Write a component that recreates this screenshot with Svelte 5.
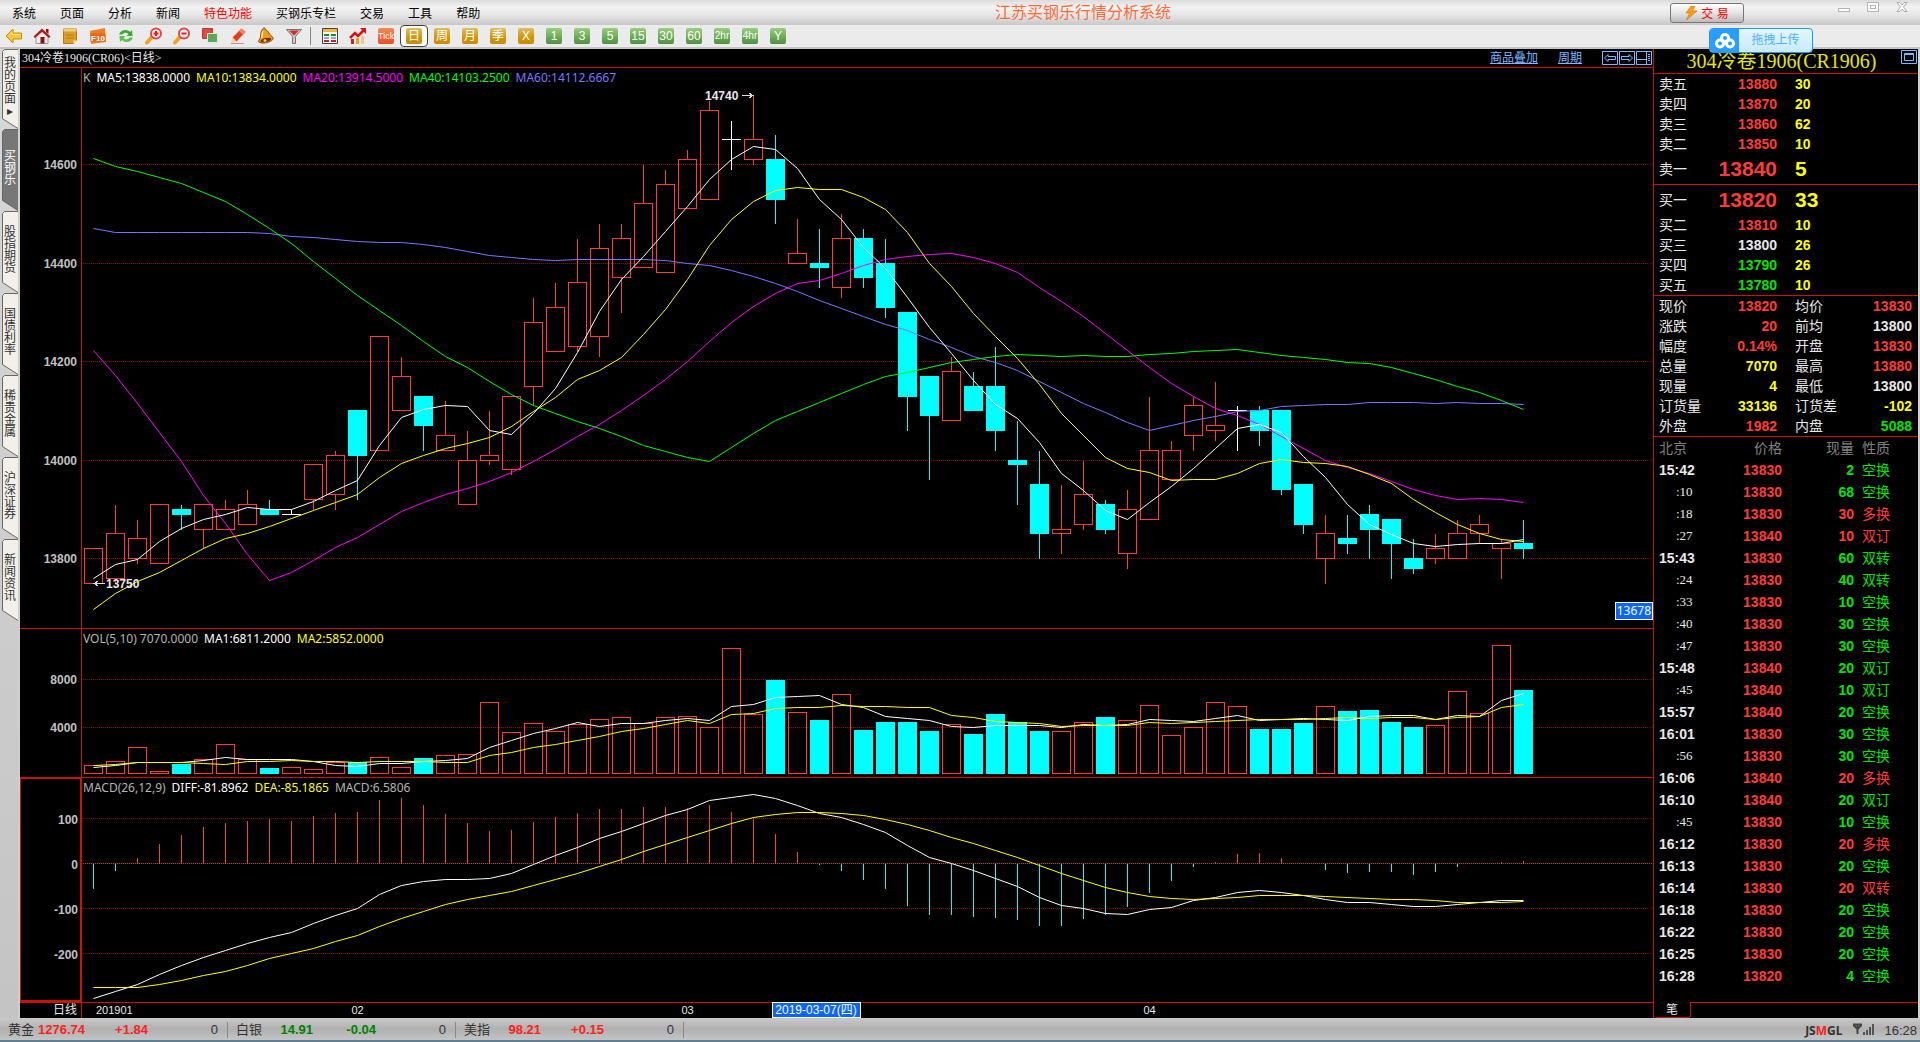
<script>
  const menus = ['系统', '页面', '分析', '新闻', '特色功能', '买钢乐专栏', '交易', '工具', '帮助']
  const sideTabs = ['我的页面', '买钢乐', '股指期货', '国债利率', '稀贵金属', '沪深证券', '新闻资讯']
  const tools = ['back', 'home', 'note', 'f10', 'refresh', 'zoomin', 'zoomout', 'layers', 'pencil', 'bell', 'filter']
  const goldPeriods = ['日', '周', '月', '季', 'X']
  const greenPeriods = ['1', '3', '5', '15', '30', '60', '2hr', '4hr', 'Y']

  // [kind, body top, body bottom, high, low]  r = up, c = down, w = flat
  const candles = [
    ['r', 13820, 13750, 13820, 13750], ['r', 13850, 13760, 13910, 13750], ['r', 13840, 13800, 13880, 13790],
    ['r', 13910, 13790, 13910, 13790], ['c', 13900, 13890, 13910, 13860], ['r', 13910, 13860, 13910, 13820],
    ['r', 13900, 13860, 13920, 13860], ['r', 13910, 13870, 13940, 13870], ['c', 13900, 13890, 13920, 13890],
    ['w', 13890, 13890, 13900, 13890], ['r', 13990, 13920, 13990, 13900], ['r', 14010, 13930, 14020, 13900],
    ['c', 14100, 14010, 14100, 13920], ['r', 14250, 14020, 14250, 14020], ['r', 14170, 14100, 14210, 14100],
    ['c', 14130, 14070, 14130, 14020], ['r', 14050, 14020, 14120, 14020], ['r', 14000, 13910, 14060, 13910],
    ['r', 14010, 14000, 14100, 13990], ['r', 14130, 13980, 14130, 13970], ['r', 14280, 14150, 14330, 14110],
    ['r', 14310, 14220, 14360, 14220], ['r', 14360, 14230, 14450, 14220], ['r', 14430, 14250, 14480, 14210],
    ['r', 14450, 14370, 14480, 14300], ['r', 14520, 14390, 14600, 14390], ['r', 14560, 14380, 14590, 14380],
    ['r', 14610, 14510, 14630, 14510], ['r', 14710, 14530, 14730, 14530], ['w', 14650, 14650, 14690, 14590],
    ['r', 14650, 14610, 14740, 14600], ['c', 14610, 14530, 14660, 14480], ['r', 14420, 14400, 14490, 14400],
    ['c', 14400, 14390, 14470, 14350], ['r', 14450, 14350, 14500, 14330], ['c', 14450, 14370, 14470, 14350],
    ['c', 14400, 14310, 14450, 14290], ['c', 14300, 14130, 14300, 14060], ['c', 14170, 14090, 14170, 13960],
    ['r', 14180, 14080, 14210, 14080], ['c', 14150, 14100, 14180, 14100], ['c', 14150, 14060, 14230, 14020],
    ['c', 14000, 13990, 14080, 13910], ['c', 13950, 13850, 14020, 13800], ['r', 13860, 13850, 13950, 13810],
    ['r', 13930, 13870, 14000, 13860], ['c', 13910, 13860, 13920, 13850], ['r', 13900, 13810, 13940, 13780],
    ['r', 14020, 13880, 14130, 13880], ['r', 14020, 13960, 14040, 13960], ['r', 14110, 14050, 14130, 14020],
    ['r', 14070, 14060, 14160, 14040], ['w', 14100, 14100, 14110, 14020], ['c', 14100, 14060, 14110, 14030],
    ['c', 14100, 13940, 14100, 13930], ['c', 13950, 13870, 13950, 13850], ['r', 13850, 13800, 13890, 13750],
    ['c', 13840, 13830, 13890, 13810], ['c', 13890, 13860, 13910, 13800], ['c', 13880, 13830, 13880, 13760],
    ['c', 13800, 13780, 13840, 13770], ['r', 13820, 13800, 13850, 13790], ['r', 13850, 13800, 13880, 13800],
    ['r', 13870, 13850, 13890, 13830], ['r', 13830, 13820, 13840, 13760], ['c', 13830, 13820, 13880, 13800]
  ]
  const volumes = [
    775, 1165, 2330, 330, 940, 1330, 2580, 1275, 530, 665, 500, 1080, 1080, 1500, 665, 1440, 1665, 1750, 6085, 3580,
    4330, 3665, 4250, 4665, 4830, 4330, 4830, 4915, 4000, 10580, 5080, 7940, 5250, 4530, 6750, 3695, 4360, 4360, 3610,
    4250, 3360, 5030, 4440, 3610, 3665, 4415, 4780, 4580, 5830, 3330, 4000, 6080, 5750, 3780, 3780, 4280, 5750, 5280,
    5440, 4360, 3945, 4165, 7000, 5165, 10835, 7070
  ]
  const macd = [
    -57, -15, 12, 45, 65, 81, 90, 96, 99, 96, 107, 114, 116, 143, 147, 130, 112, 90, 74, 76, 94, 105, 114, 123, 123, 127,
    127, 124, 130, 116, 103, 67, 27, -3, -17, -37, -57, -93, -115, -115, -119, -121, -126, -139, -139, -124, -115, -97,
    -64, -39, -8, 5, 21, 25, 12, -1, -13, -21, -19, -19, -24, -19, -8, -1, 3, 6
  ]
  const diff = [
    -302, -285, -270, -247, -227, -210, -194, -179, -165, -154, -134, -116, -101, -69, -49, -40, -36, -36, -33, -22, -3,
    17, 36, 56, 71, 89, 107, 120, 140, 147, 153, 144, 128, 111, 102, 87, 69, 39, 13, 0, -16, -33, -51, -76, -93, -100,
    -111, -113, -104, -98, -84, -76, -64, -60, -64, -71, -80, -87, -87, -91, -96, -96, -91, -87, -84, -82
  ]
  const dea = [
    -276, -276, -276, -269, -260, -251, -241, -227, -213, -202, -189, -174, -160, -140, -122, -107, -91, -80, -71, -62,
    -49, -36, -22, -7, 9, 27, 42, 58, 73, 89, 102, 109, 113, 113, 111, 107, 98, 87, 73, 58, 44, 29, 13, -4, -22, -38,
    -53, -64, -73, -78, -80, -78, -76, -71, -71, -71, -73, -76, -78, -80, -81, -84, -87, -87, -87, -85
  ]

  const closes = candles.map(c => (c[0] === 'c' ? c[2] : c[1]))

  // head holds the averages of the days that need closes from before the first bar
  function average(values, n, head) {
    return values.map((v, i) => {
      if (i < head.length) return head[i]
      return values.slice(i - n + 1, i + 1).reduce((a, b) => a + b, 0) / n
    })
  }

  const priceLines = [
    { cls: 'blue', values: average(closes, 60, [
      14470, 14461, 14461, 14461, 14461, 14461, 14463, 14463, 14459, 14453, 14451, 14448, 14443, 14441, 14441, 14437,
      14431, 14423, 14415, 14411, 14407, 14405, 14407, 14407, 14407, 14407, 14405, 14399, 14395, 14384, 14372, 14358,
      14342, 14323, 14307, 14291, 14275, 14263, 14244, 14228, 14210, 14198, 14181, 14160, 14138, 14115, 14096, 14076,
      14060, 14070, 14080, 14088, 14098, 14101, 14109, 14111, 14113, 14113, 14117]) },
    { cls: 'green', values: average(closes, 40, [
      14612, 14597, 14585, 14573, 14561, 14544, 14524, 14498, 14471, 14439, 14403, 14369, 14335, 14303, 14273, 14241,
      14210, 14187, 14159, 14133, 14110, 14095, 14079, 14064, 14047, 14029, 14017, 14005, 13997, 14026, 14054, 14080,
      14099, 14117, 14136, 14153, 14169, 14177, 14187]) },
    { cls: 'magenta', values: average(closes, 20, [
      14222, 14171, 14114, 14055, 13997, 13929, 13871, 13808, 13755, 13772, 13797, 13822, 13843, 13869, 13895, 13914,
      13931, 13942, 13956]) },
    { cls: 'yellow', values: average(closes, 10, [13696, 13729, 13753, 13772, 13797, 13820, 13841, 13850, 13866]) },
    { cls: 'white', values: average(closes, 5, [13759, 13788, 13798, 13834]) }
  ]
  const volumeLines = [
    { cls: 'white', values: average(volumes, 5, [665, 800, 1050, 1050]) },
    { cls: 'yellow', values: average(volumes, 10, [830, 915, 1050, 1050, 1050, 1000, 915, 1165, 1165]) }
  ]

  // panel heights follow the window
  let priceH = $state(560)
  let volH = $state(148)
  let macdH = $state(224)

  const scale = (v, h, max, min) => ((max - v) / (max - min)) * h
  const py = v => Math.floor(scale(v, priceH, 14796, 13659)) + 0.5
  const vy = v => Math.floor(scale(v, volH, 12192, -142)) + 0.5
  const my = v => Math.floor(scale(v, macdH, 190, -309)) + 0.5
  const x = i => 11.5 + i * 22
  const points = (values, y) => values.map((v, i) => `${x(i)},${y(v)}`).join(' ')

  const asks = [
    ['卖五', 13880, 30, 'up'], ['卖四', 13870, 20, 'up'], ['卖三', 13860, 62, 'up'], ['卖二', 13850, 10, 'up'], ['卖一', 13840, 5, 'up']
  ]
  const bids = [
    ['买一', 13820, 33, 'up'], ['买二', 13810, 10, 'up'], ['买三', 13800, 26, 'flat'], ['买四', 13790, 26, 'down'], ['买五', 13780, 10, 'down']
  ]
  const stats = [
    ['现价', '13820', 'up', '均价', '13830', 'up'],
    ['涨跌', '20', 'up', '前均', '13800', 'flat'],
    ['幅度', '0.14%', 'up', '开盘', '13830', 'up'],
    ['总量', '7070', 'qty', '最高', '13880', 'up'],
    ['现量', '4', 'qty', '最低', '13800', 'flat'],
    ['订货量', '33136', 'qty', '订货差', '-102', 'qty'],
    ['外盘', '1982', 'up', '内盘', '5088', 'down']
  ]
  const ticks = [
    ['15:42', 13830, 2, '空换'], [':10', 13830, 68, '空换'], [':18', 13830, 30, '多换', 1], [':27', 13840, 10, '双订', 1],
    ['15:43', 13830, 60, '双转'], [':24', 13830, 40, '双转'], [':33', 13830, 10, '空换'], [':40', 13830, 30, '空换'],
    [':47', 13830, 30, '空换'], ['15:48', 13840, 20, '双订'], [':45', 13840, 10, '双订'], ['15:57', 13840, 20, '空换'],
    ['16:01', 13830, 30, '空换'], [':56', 13830, 30, '空换'], ['16:06', 13840, 20, '多换', 1], ['16:10', 13840, 20, '双订'],
    [':45', 13830, 10, '空换'], ['16:12', 13830, 20, '多换', 1], ['16:13', 13830, 20, '空换'], ['16:14', 13830, 20, '双转', 1],
    ['16:18', 13830, 20, '空换'], ['16:22', 13830, 20, '空换'], ['16:25', 13830, 20, '空换'], ['16:28', 13820, 4, '空换']
  ]
  const quotes = [
    ['黄金', '1276.74', '+1.84', 'rise'], ['白银', '14.91', '-0.04', 'fall'], ['美指', '98.21', '+0.15', 'rise']
  ]
</script>

{#snippet bookRows(rows)}
  {#each rows as [name, price, qty, tone]}
    <tr class:best={name.endsWith('一')}>
      <th scope="row">{name}</th>
      <td class="num {tone}">{price}</td>
      <td class="lots">{qty}</td>
    </tr>
  {/each}
{/snippet}

{#snippet toolIcon(name)}
  <svg width="18" height="18" viewBox="0 0 18 18" aria-hidden="true">
    {#if name === 'back'}
      <path d="M1 9l7-7v4h8.500v6H8v4z" fill="#fbc62c" stroke="#c98a12" />
      <path d="M4 8.500l3-3v2h8" stroke="#ffeb96" fill="none" />
    {:else if name === 'home'}
      <path d="M3 9v7.500h12V9L9 4z" fill="#eee" stroke="#999" />
      <path d="M0.500 9.500L9 1.500l8.500 8-1.500 1.500L9 5l-7 6z" fill="#b01c1c" />
      <path d="M13 2h2.500v5L13 5zM7.500 10h4v6.500h-4z" fill="#8e1212" />
    {:else if name === 'note'}
      <path d="M2.500 2h13v11l-3 3.500h-10z" fill="#dc9f2c" stroke="#b57b13" />
      <path d="M2.500 2h13v2.500h-13z" fill="#f6cd70" />
      <path d="M5 8h8M5 11h8" stroke="#b57b13" />
      <path d="M12.500 16.500v-3h3z" fill="#fff0c0" />
    {:else if name === 'f10'}
      <path d="M1 4l5-1 10-2 1 14-15 2z" fill="#ef7d21" />
      <path d="M1.500 6.500h15v8h-15z" fill="#e2691a" />
      <text x="9" y="14" text-anchor="middle" fill="#fff" font-size="8" font-weight="700">F10</text>
    {:else if name === 'refresh'}
      <path d="M2 7.500C4 2 11 2 13 5l2-2 .5 6H9.500l2-2C9.500 5 6.500 5.500 5.500 7.500z" fill="#3fa63a" />
      <path d="M16 10.500c-2 5.500-9 5.500-11 2.500l-2 2L2.500 9h6l-2 2c2 2 5 1.500 6-.5z" fill="#5fbe50" />
    {:else if name === 'zoomin' || name === 'zoomout'}
      <path d="M6.500 10.500L2 15.500" stroke="#f5a21c" stroke-width="4" stroke-linecap="round" />
      <circle cx="11" cy="6.500" r="5" fill="#fff1f1" stroke="#e04848" stroke-width="2" />
      <path d={name === 'zoomin' ? 'M8.500 6.500h5M11 4v5' : 'M8.500 6.500h5'} stroke="#e21b1b" stroke-width="2" />
    {:else if name === 'layers'}
      <path d="M1.500 1.500h10v10h-10z" fill="#e0493f" stroke="#b8382f" />
      <path d="M6.500 6.500h10v9h-10z" fill="#58a95a" stroke="#d9ecd9" />
    {:else if name === 'pencil'}
      <path d="M3.500 10.500L12.500 1.500l4 3.500-9 9.500z" fill="#e23c26" />
      <path d="M10 4l4 3.500 2.500-2.500-4-3.500z" fill="#f58a74" />
      <path d="M3.500 10.500l4 4-5.500 1.500z" fill="#f4d3a0" />
      <path d="M2 16.500h13" stroke="#d88" />
    {:else if name === 'bell'}
      <path d="M6 1.500c1-1 2.500-.5 2.500 1C12 4 12 8 16 10.500c1 1.500-1 3-3 4-4 2-9 2-11 .5-1-1.500 1-2.500 1.500-5C4 7 3.500 4 6 1.500z" fill="#e9a01d" stroke="#8a4a08" />
      <path d="M6 4c-1 2-.5 4-1.500 7" stroke="#ffe08a" stroke-width="1.500" fill="none" />
      <ellipse cx="9" cy="13" rx="5.500" ry="2" transform="rotate(-12 9 13)" fill="#7d2a10" />
      <circle cx="8" cy="13.500" r="1.500" fill="#f5c847" />
    {:else if name === 'filter'}
      <path d="M1.500 2.500h15l-6 7v7h-3v-7z" fill="#c9c9c9" stroke="#777" />
      <path d="M4 3.500h10l-5 5z" fill="#e02727" />
    {/if}
  </svg>
{/snippet}

<div class="app">
  <header class="menubar">
    <nav class="menus">
      {#each menus as item}
        <button class:hot={item === '特色功能'}>{item}</button>
      {/each}
    </nav>
    <h1>江苏买钢乐行情分析系统</h1>
    <button class="trade">
      <svg width="12" height="14" viewBox="0 0 12 14" aria-hidden="true"><path d="M6 0L1 7h3.500L1.500 14 12 5H7.500L10 0z" fill="#ff9d0a" stroke="#d06500" stroke-width=".5" /></svg>
      <span>交 易</span>
    </button>
    <div class="window-buttons">
      <button aria-label="最小化"><svg width="14" height="12"><rect x="1.500" y="7.500" width="11" height="3" fill="#fff" stroke="#b5b5b5" /></svg></button>
      <button aria-label="最大化"><svg width="14" height="12"><rect x="1.500" y="1.500" width="11" height="9" fill="#fff" stroke="#b5b5b5" /><rect x="4.500" y="4.500" width="5" height="3" fill="none" stroke="#b5b5b5" /></svg></button>
      <button aria-label="关闭"><svg width="14" height="12"><path d="M2 1.500h3l2 2.500 2-2.500h3L8.500 6l3.500 4.500H9L7 8l-2 2.500H2L5.500 6z" fill="#fff" stroke="#aaa" /></svg></button>
    </div>
  </header>

  <div class="toolbar">
    {#each tools as name}
      <button class="tool" aria-label={name}>{@render toolIcon(name)}</button>
    {/each}
    <span class="sep"></span>
    <button class="tool" aria-label="报价">
      <svg width="18" height="18" viewBox="0 0 18 18"><path d="M1.500 1.500h15v15h-15z" fill="#fff" stroke="#444" /><path d="M2 2h14v3H2z" fill="#f2b63a" /><path d="M3 8h5M10 8h5" stroke="#178a2c" stroke-width="2" /><path d="M3 11h5M10 11h5" stroke="#1a49b8" /><path d="M3 14h5M10 14h5" stroke="#d01f1f" stroke-width="2" /></svg>
    </button>
    <button class="tool" aria-label="走势">
      <svg width="18" height="18" viewBox="0 0 18 18"><path d="M2 12h3v5H2z" fill="#d01f1f" /><path d="M7 11h3v6H7z" fill="#e9a01d" /><path d="M12 9h3v8h-3z" fill="#f0c69a" /><path d="M1 11l5-5 3 3 7-7" fill="none" stroke="#d81515" stroke-width="2.500" /><path d="M11 1h6v6z" fill="#d81515" /></svg>
    </button>
    <button class="tool"><span class="badge tick">Tick</span></button>
    {#each goldPeriods as p}
      <button class="tool" class:picked={p === '日'}><span class="badge gold">{p}</span></button>
    {/each}
    {#each greenPeriods as p}
      <button class="tool"><span class="badge lime" class:long={p.length > 2}>{p}</span></button>
    {/each}
    <button class="upload">
      <span class="cloud">
        <svg width="20" height="16" viewBox="0 0 20 16" fill="none" stroke="#fff" stroke-width="3" aria-hidden="true"><circle cx="10" cy="5" r="3.500" /><circle cx="5" cy="10.500" r="3.500" /><circle cx="15" cy="10.500" r="3.500" /></svg>
      </span>
      <span class="upload-text">拖拽上传</span>
    </button>
  </div>

  <main>
    <nav class="side">
      {#each sideTabs as tab, i}
        <button class:current={i === 1}>
          <svg viewBox="0 0 16 82" preserveAspectRatio="none" aria-hidden="true"><path d="M16 .5H2.500L.5 2.500V71.500L16 81.500" /></svg>
          <span>{tab}{#if i === 0}<i>▸</i>{/if}</span>
        </button>
      {/each}
    </nav>

    <section class="charts">
      <div class="chart-head">
        <span class="symbol">304冷卷1906(CR06)&lt;日线&gt;</span>
        <a href="#overlay">商品叠加</a>
        <a href="#period">周期</a>
        <div class="frames">
          <button aria-label="左移"><svg width="16" height="14"><path d="M.5.5h15v13H.5zM2.500 7L6 3.500v2h7.500v3H6v2z" /></svg></button>
          <button aria-label="右移"><svg width="16" height="14"><path d="M.5.5h15v13H.5zM13.500 7L10 3.500v2H2.500v3H10v2z" /></svg></button>
          <button aria-label="布局"><svg width="16" height="14"><path d="M.5.5h15v13H.5zM.5 8.500h10M10.500.5v13M12 3.500h2M12 5.500h2M12 7.500h2M12 9.500h2" /></svg></button>
        </div>
      </div>

      <div class="panel price">
        <svg class="axis">
          {#each [14600, 14400, 14200, 14000, 13800] as v}
            <text x="57" y={py(v) + 4}>{v}</text>
          {/each}
        </svg>
        <div class="plot" bind:clientHeight={priceH}>
          <svg class="canvas">
            {#each [14600, 14400, 14200, 14000, 13800] as v}
              <line class="grid" x1="1" x2="100%" y1={py(v)} y2={py(v)} />
            {/each}
            {#each candles as [kind, top, bottom, high, low], i}
              <g class={kind}>
                <line x1={x(i)} x2={x(i)} y1={py(high)} y2={py(top)} />
                <line x1={x(i)} x2={x(i)} y1={py(bottom)} y2={py(low) + 0.5} />
                {#if kind === 'w'}
                  <line x1={x(i) - 9.5} x2={x(i) + 9.5} y1={py(top)} y2={py(top)} />
                {:else}
                  <rect x={x(i) - 9} y={py(top)} width="18" height={py(bottom) - py(top)} />
                {/if}
              </g>
            {/each}
            {#each priceLines as line}
              <polyline class={line.cls} points={points(line.values, py)} />
            {/each}
            <text class="mark" x="623" y={py(14740) + 4}>14740</text>
            <path class="arrow" d="M660 {py(14740)}h11m-4 -2.500l4 2.500-4 2.500" />
            <text class="mark" x="24" y={py(13750) + 4}>13750</text>
            <path class="arrow" d="M23 {py(13750)}h-11m4 -2.500l-4 2.500 4 2.500" />
          </svg>
          <p class="legend">
            <span>K</span><span class="white">MA5:13838.0000</span><span class="yellow">MA10:13834.0000</span>
            <span class="magenta">MA20:13914.5000</span><span class="green">MA40:14103.2500</span><span class="blue">MA60:14112.6667</span>
          </p>
          <span class="cursor-price">13678</span>
        </div>
      </div>

      <div class="panel volume">
        <svg class="axis">
          {#each [8000, 4000] as v}
            <text x="57" y={vy(v) + 4}>{v}</text>
          {/each}
        </svg>
        <div class="plot" bind:clientHeight={volH}>
          <svg class="canvas">
            {#each [8000, 4000] as v}
              <line class="grid" x1="1" x2="100%" y1={vy(v)} y2={vy(v)} />
            {/each}
            {#each volumes as v, i}
              <rect class={candles[i][0] === 'c' ? 'down-bar' : 'up-bar'} x={x(i) - 9} y={vy(v)} width="18" height={vy(160) - vy(v)} />
            {/each}
            {#each volumeLines as line}
              <polyline class={line.cls} points={points(line.values, vy)} />
            {/each}
          </svg>
          <p class="legend">
            <span>VOL(5,10) 7070.0000</span><span class="white">MA1:6811.2000</span><span class="yellow">MA2:5852.0000</span>
          </p>
        </div>
      </div>

      <div class="panel macd">
        <svg class="axis">
          {#each [100, 0, -100, -200] as v}
            <text x="57" y={my(v) + 4}>{v}</text>
          {/each}
        </svg>
        <div class="plot" bind:clientHeight={macdH}>
          <svg class="canvas">
            {#each [100, 0, -100, -200] as v}
              <line class="grid" class:zero={v === 0} x1="1" x2="100%" y1={my(v)} y2={my(v)} />
            {/each}
            {#each macd as v, i}
              <line class={v < 0 ? 'neg' : 'pos'} x1={x(i)} x2={x(i)} y1={my(0)} y2={my(v)} />
            {/each}
            <polyline class="white" points={points(diff, my)} />
            <polyline class="yellow" points={points(dea, my)} />
          </svg>
          <p class="legend">
            <span>MACD(26,12,9)</span><span class="white">DIFF:-81.8962</span><span class="yellow">DEA:-85.1865</span><span>MACD:6.5806</span>
          </p>
        </div>
      </div>

      <div class="dates">
        <span class="unit">日线</span>
        <svg class="months">
          <text x="14" y="12">201901</text>
          <text x={x(12)} y="12" text-anchor="middle">02</text>
          <text x={x(27)} y="12" text-anchor="middle">03</text>
          <text x={x(48)} y="12" text-anchor="middle">04</text>
          <rect x="690.500" y=".5" width="88" height="15" />
          <text class="picked-date" x="734" y="12" text-anchor="middle">2019-03-07(四)</text>
        </svg>
      </div>
    </section>

    <aside class="quote">
      <div class="quote-head">
        <h2>304冷卷1906(CR1906)</h2>
        <button aria-label="展开"><svg width="16" height="14"><path d="M.5.5h15v13H.5zM3.500 3.500h9v7h-9zM3.500 4.500h9" /></svg></button>
      </div>
      <table class="book"><tbody>{@render bookRows(asks)}</tbody></table>
      <table class="book"><tbody>{@render bookRows(bids)}</tbody></table>
      <table class="stats">
        <tbody>
          {#each stats as [a, av, at, b, bv, bt]}
            <tr>
              <th scope="row">{a}</th><td class="num {at}">{av}</td>
              <th scope="row" class="second">{b}</th><td class="num {bt}">{bv}</td>
            </tr>
          {/each}
        </tbody>
      </table>
      <table class="ticks">
        <thead><tr><th>北京</th><th class="right">价格</th><th class="right">现量</th><th class="kind">性质</th></tr></thead>
        <tbody>
          {#each ticks as [time, price, qty, kind, up]}
            <tr>
              <td class={time[0] === ':' ? 'seconds' : 'time'}>{time}</td>
              <td class="num up">{price}</td>
              <td class="num {up ? 'up' : 'down'}">{qty}</td>
              <td class="kind {up ? 'up' : 'down'}">{kind}</td>
            </tr>
          {/each}
        </tbody>
      </table>
      <div class="quote-tabs"><button>笔</button></div>
    </aside>
  </main>

  <footer>
    {#each quotes as [name, price, change, tone]}
      <div class="index">
        <span>{name}</span><b class={tone}>{price}</b><b class={tone}>{change}</b><span class="vol">0</span>
      </div>
    {/each}
    <div class="state">
      <strong>JS<em>M</em>GL</strong>
      <svg width="22" height="14" viewBox="0 0 22 14" aria-hidden="true"><path d="M1 1.500h9M1.500 2l4 4 4-4M5.500 2v9" fill="none" stroke="#444" stroke-width="2" /><path d="M11 9h2v3h-2zM14 7h2v5h-2zM17 4h2v8h-2zM20 1h2v11h-2z" fill="#555" /></svg>
      <time>16:28</time>
    </div>
  </footer>
</div>

<style>
  :global(body) {
    margin: 0;
    background: #000;
  }

  .app {
    display: flex;
    flex-direction: column;
    height: 100vh;
    min-height: 1040px;
    font-family: "Liberation Sans", "Noto Sans CJK SC", sans-serif;
    font-size: 12px;
    color: #e8e8e8;
  }

  button {
    padding: 0;
    border: 0;
    background: none;
    color: inherit;
    font: inherit;
  }

  svg {
    display: block;
  }

  h1, h2, p {
    margin: 0;
    font-weight: 400;
  }

  /* menu bar */
  .menubar {
    display: flex;
    align-items: center;
    height: 25px;
    background: linear-gradient(#dcdcdc, #f3f3f3 30%, #e6e6e6 60%, #c8c8c8);
    color: #000;
  }

  .menus {
    display: flex;
    gap: 24px;
    padding-left: 12px;
  }

  .menus .hot {
    color: #f00;
  }

  h1 {
    flex: 1;
    padding-left: 16px;
    text-align: center;
    font-size: 16px;
    line-height: 24px;
    color: #ff6c3a;
  }

  .trade {
    display: flex;
    align-items: center;
    justify-content: center;
    gap: 4px;
    width: 74px;
    height: 20px;
    box-sizing: border-box;
    border: 1px solid #777;
    border-radius: 3px;
    background: linear-gradient(#fff, #e4e4e4 50%, #bbb);
    color: #f00;
  }

  .window-buttons {
    display: flex;
    align-self: flex-start;
    gap: 15px;
    padding: 1px 11px 0 93px;
  }

  /* toolbar */
  .toolbar {
    position: relative;
    display: flex;
    align-items: center;
    height: 22px;
    background: #ebebeb;
    border-bottom: 2px solid #c8c4c4;
  }

  .tool {
    display: flex;
    align-items: center;
    justify-content: center;
    box-sizing: border-box;
    width: 28px;
    height: 22px;
  }

  .picked {
    border: 1px solid #444;
    border-radius: 4px;
    background: #fff;
  }

  .sep {
    width: 1px;
    height: 18px;
    margin: 0 5px 0 2px;
    background: #888;
  }

  .badge {
    width: 16px;
    height: 16px;
    border-radius: 2px;
    color: #fff;
    font-size: 12px;
    line-height: 16px;
    text-align: center;
  }

  .gold {
    background: linear-gradient(#dcbf62, #cf9708 60%, #c98a00);
  }

  .lime {
    background: linear-gradient(#97cf7c, #4d8f3f);
  }

  .tick {
    background: linear-gradient(#f58a50, #ee4d20);
    font-size: 9px;
  }

  .long {
    font-size: 10px;
  }

  .upload {
    position: absolute;
    top: 3px;
    right: 107px;
    z-index: 2;
    display: flex;
    box-sizing: border-box;
    width: 104px;
    height: 25px;
    border: 1px solid #1e96ff;
    border-radius: 4px;
    background: linear-gradient(#e4f6ff, #c6ebff);
    overflow: hidden;
  }

  .cloud {
    display: flex;
    align-items: center;
    justify-content: center;
    width: 29px;
    height: 100%;
    background: #2a9eff;
  }

  .upload-text {
    flex: 1;
    line-height: 23px;
    color: #4eb1f5;
  }

  main {
    flex: 1;
    display: flex;
    min-height: 0;
    background: #d2cecb;
  }

  /* page tabs */
  .side {
    width: 18px;
    padding-left: 2px;
    box-sizing: border-box;
    background: linear-gradient(#d8d8d8, #c4c4c4);
    margin-right: 2px;
  }

  .side button {
    position: relative;
    display: flex;
    align-items: center;
    justify-content: center;
    width: 16px;
    height: 82px;
    padding-bottom: 4px;
    box-sizing: border-box;
    color: #333;
  }

  .side button:first-child {
    height: 80px;
  }

  .side svg {
    position: absolute;
    inset: 0;
    width: 16px;
    height: 100%;
    fill: #f2f0e9;
    stroke: #666;
  }

  .side .current svg {
    fill: #777;
  }

  .side .current {
    color: #fff;
  }

  .side span {
    position: relative;
    width: 12px;
    line-height: 12px;
    word-break: break-all;
  }

  .side i {
    display: block;
    font-style: normal;
    text-align: center;
  }

  /* charts */
  .charts {
    flex: 1;
    display: flex;
    flex-direction: column;
    min-width: 0;
    background: #000;
  }

  .chart-head {
    display: flex;
    align-items: center;
    height: 18px;
    padding: 0 1px 0 2px;
  }

  .symbol {
    flex: 1;
    font-family: "Liberation Serif", "Noto Sans CJK SC", serif;
    font-size: 12px;
    line-height: 18px;
  }

  .chart-head a {
    margin-right: 20px;
    color: #7db9ff;
    line-height: 16px;
  }

  .frames {
    display: flex;
    gap: 1px;
  }

  .frames svg, .quote-head svg {
    fill: none;
    stroke: #7db9ff;
  }

  .panel {
    display: flex;
    min-height: 0;
    border-top: 1px solid #c81408;
  }

  .price {
    flex: 560 1 0;
  }

  .volume {
    flex: 148 1 0;
  }

  .macd {
    flex: 224 1 0;
  }

  .axis {
    flex: none;
    box-sizing: border-box;
    width: 62px;
    height: 100%;
    border-right: 1px solid #c81408;
  }

  .macd .axis {
    border: 1px solid #c81408;
    border-width: 1px 2px 2px 1px;
  }

  .axis text {
    fill: #c0c0c0;
    font-weight: 700;
    text-anchor: end;
  }

  .plot {
    position: relative;
    flex: 1;
    min-width: 0;
  }

  .canvas {
    width: 100%;
    height: 100%;
    shape-rendering: crispEdges;
  }

  .grid {
    stroke: #900000;
    stroke-dasharray: 1 1;
  }

  .grid.zero {
    stroke: #e03030;
  }

  .r, .up-bar {
    stroke: #ff3c38;
    fill: none;
  }

  .c, .down-bar {
    stroke: #0ff;
    fill: #0ff;
  }

  .w {
    stroke: #fff;
  }

  .pos {
    stroke: #ff3c38;
  }

  .neg {
    stroke: #0ff;
  }

  polyline {
    fill: none;
    shape-rendering: auto;
  }

  polyline.white { stroke: #fff; }
  polyline.yellow { stroke: #ff0; }
  polyline.magenta { stroke: #f0f; }
  polyline.green { stroke: #0f0; }
  polyline.blue { stroke: #7878ff; }

  .mark {
    fill: #e8e8e8;
    font-weight: 700;
  }

  .arrow {
    fill: none;
    stroke: #ddd;
  }

  /* indicator values lie over the plot */
  .legend {
    position: absolute;
    top: 1px;
    left: 1px;
    display: flex;
    gap: 6px;
    font-family: "Noto Sans", sans-serif;
    font-size: 12px;
    line-height: 18px;
    color: #b4b4b4;
    white-space: nowrap;
  }

  .legend .white { color: #fff; }
  .legend .yellow { color: #ff0; }
  .legend .magenta { color: #f0f; }
  .legend .green { color: #0f0; }
  .legend .blue { color: #7878ff; }

  .cursor-price {
    position: absolute;
    right: 0;
    bottom: 8px;
    padding: 0 1px;
    border: 1px solid #fff;
    background: #0a64ff;
    color: #fff;
    font-family: "Noto Sans", sans-serif;
    font-size: 12px;
    line-height: 16px;
  }

  .dates {
    display: flex;
    height: 15px;
    border-top: 1px solid #c81408;
  }

  .unit {
    box-sizing: border-box;
    width: 62px;
    padding-right: 4px;
    border-right: 1px solid #c81408;
    line-height: 15px;
    text-align: right;
  }

  .months {
    flex: 1;
    height: 16px;
    margin-top: -1px;
    font-size: 11px;
    fill: #e8e8e8;
  }

  .months rect {
    fill: #0a64ff;
    stroke: #fff;
  }

  .picked-date {
    font-size: 12px;
    fill: #fff;
  }

  /* quote panel */
  .quote {
    display: flex;
    flex-direction: column;
    box-sizing: border-box;
    width: 265px;
    margin-right: 2px;
    border-left: 1px solid #c81408;
    background: #000;
  }

  .quote-head {
    display: flex;
    height: 24px;
    padding-right: 1px;
  }

  h2 {
    flex: 1;
    padding-left: 8px;
    color: #e6e600;
    font-family: "Liberation Serif", "Noto Sans CJK SC", serif;
    font-size: 20px;
    line-height: 24px;
    text-align: center;
  }

  .quote-head button {
    align-self: flex-start;
    padding-top: 1px;
  }

  table {
    width: 100%;
    border-spacing: 0;
    border-top: 1px solid #c81408;
    table-layout: fixed;
    font-size: 14px;
  }

  th, td {
    height: 20px;
    padding: 0;
    line-height: 20px;
    font-weight: 400;
    text-align: left;
    white-space: nowrap;
  }

  th:first-child {
    width: 48px;
    padding-left: 5px;
  }

  .num {
    font-weight: 700;
    text-align: right;
  }

  .book .num {
    width: 70px;
  }

  .lots {
    padding-left: 18px;
    color: #ff0;
    font-weight: 700;
  }

  .best th, .best td {
    height: 30px;
  }

  .best td {
    font-size: 21px;
  }

  .up { color: #ff3c38; }
  .down { color: #00e600; }
  .flat { color: #e8e8e8; }
  .qty { color: #ff0; }

  .stats td:nth-child(2) {
    width: 70px;
  }

  .stats td:last-child {
    padding-right: 6px;
  }

  .second {
    width: 48px;
    padding-left: 18px;
  }

  .ticks th, .ticks td {
    height: 22px;
    line-height: 22px;
  }

  .ticks th {
    color: #808080;
  }

  .ticks th:nth-child(2) {
    width: 75px;
  }

  .ticks th:nth-child(3) {
    width: 72px;
  }

  .ticks .right {
    text-align: right;
  }

  .ticks .kind {
    padding-left: 8px;
  }

  .time {
    padding-left: 5px;
    font-weight: 700;
  }

  .ticks .seconds {
    padding-left: 22px;
    font-family: "Liberation Serif", serif;
    font-size: 13px;
  }

  .quote-tabs {
    display: flex;
    margin-top: auto;
    height: 16px;
  }

  .quote-tabs button {
    width: 37px;
    border: 1px solid #c81408;
    border-width: 0 1px 1px 0;
    border-radius: 0 0 3px 3px;
    line-height: 14px;
  }

  .quote-tabs::after {
    content: "";
    flex: 1;
    border-top: 1px solid #c81408;
  }

  /* status bar */
  footer {
    display: flex;
    align-items: center;
    box-sizing: border-box;
    height: 24px;
    padding-top: 2px;
    border-bottom: 2px solid #5f7f95;
    background: linear-gradient(#c9c9c9, #b0b0b0 50%, #c4c4c4);
    color: #333;
    font-size: 13px;
  }

  .index {
    display: grid;
    grid-template-columns: 26px 51px 63px 70px;
    box-sizing: border-box;
    width: 228px;
    padding-left: 8px;
    border-right: 1px solid #888;
    line-height: 16px;
    text-align: right;
  }

  .rise { color: #ff2020; }
  .fall { color: #008000; }

  .state {
    display: flex;
    align-items: center;
    gap: 10px;
    margin-left: auto;
    padding-right: 3px;
  }

  .state strong {
    font-family: "Noto Sans", sans-serif;
    font-size: 12px;
  }

  .state em {
    color: #ff2020;
    font-style: normal;
  }

  .state time {
    font-size: 13px;
  }
</style>
